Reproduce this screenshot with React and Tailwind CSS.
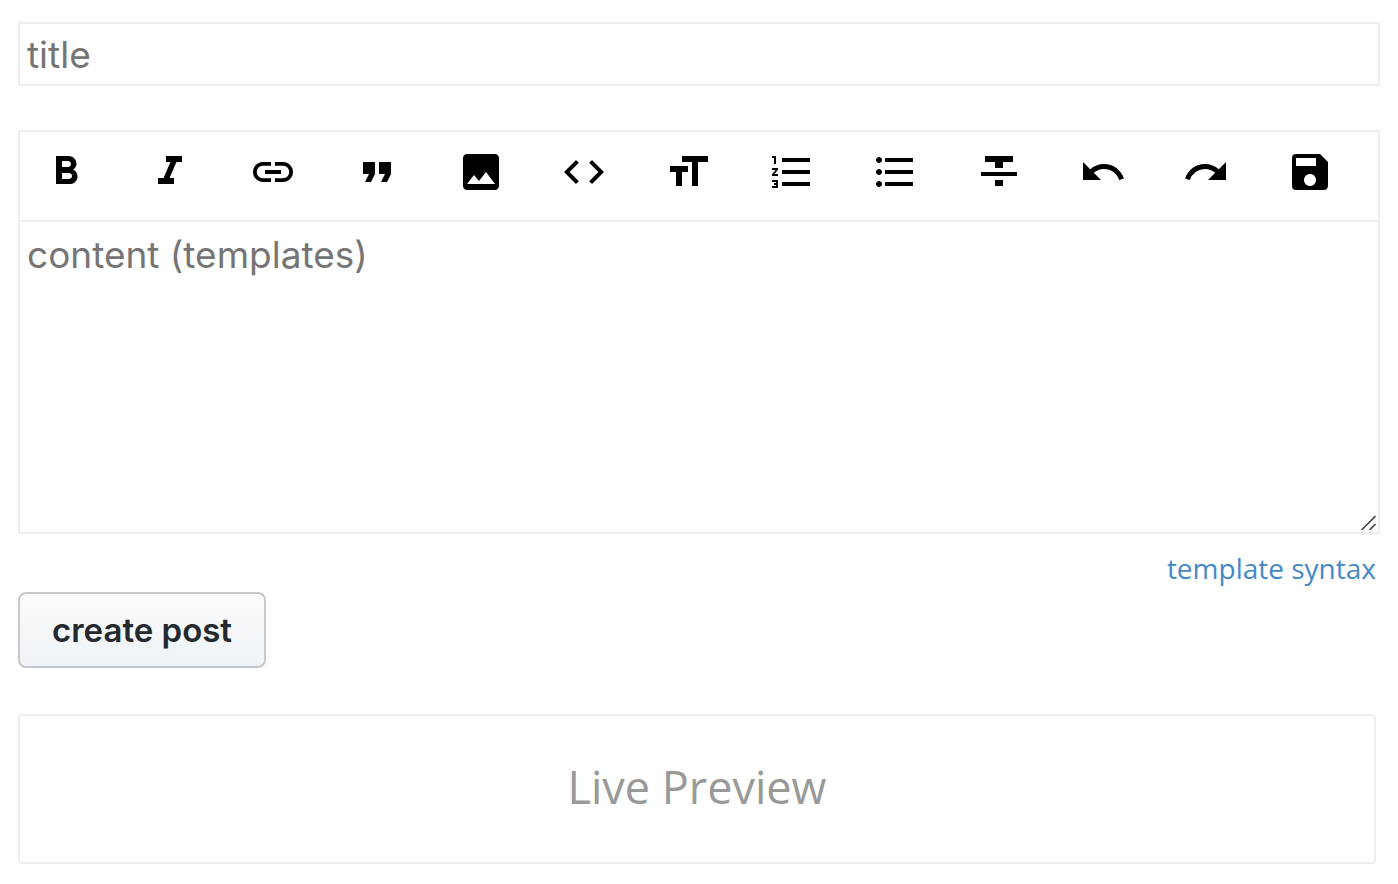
import React from "react";
import {
  MdFormatBold,
  MdFormatItalic,
  MdInsertLink,
  MdFormatQuote,
  MdImage,
  MdCode,
  MdFormatSize,
  MdFormatListNumbered,
  MdFormatListBulleted,
  MdFormatStrikethrough,
  MdUndo,
  MdRedo,
  MdSave,
} from "react-icons/md";

const tools = [
  { label: "Bold", Icon: MdFormatBold },
  { label: "Italic", Icon: MdFormatItalic },
  { label: "Link", Icon: MdInsertLink },
  { label: "Quote", Icon: MdFormatQuote },
  { label: "Image", Icon: MdImage },
  { label: "Code", Icon: MdCode },
  { label: "Text size", Icon: MdFormatSize },
  { label: "Numbered list", Icon: MdFormatListNumbered },
  { label: "Bulleted list", Icon: MdFormatListBulleted },
  { label: "Strikethrough", Icon: MdFormatStrikethrough },
  { label: "Undo", Icon: MdUndo },
  { label: "Redo", Icon: MdRedo },
  { label: "Save", Icon: MdSave },
];

function Toolbar() {
  return (
    <div
      role="toolbar"
      aria-label="Formatting"
      className="flex justify-between border-b-2 border-[#eeeeee] pt-4 pr-11 pb-6 pl-[22px]"
    >
      {tools.map(({ label, Icon }) => (
        <button key={label} type="button" aria-label={label} className="text-black">
          <Icon className="size-12" />
        </button>
      ))}
    </div>
  );
}

function ResizeGrip() {
  return (
    <svg
      aria-hidden="true"
      viewBox="0 0 16 16"
      className="pointer-events-none absolute right-0.5 bottom-0.5 size-4"
      fill="none"
      stroke="#4a4a4a"
      strokeWidth="1.7"
    >
      <path d="M1.5 16 15.5 2M9.5 16l6-6" />
    </svg>
  );
}

export default function App() {
  return (
    <form
      className="bg-white pt-[22px] pr-[18px] pb-5 pl-[18px] font-['Open_Sans',sans-serif]"
      onSubmit={(e) => e.preventDefault()}
    >
      <input
        type="text"
        aria-label="title"
        placeholder="title"
        className="block h-16 w-full border-2 border-[#eeeeee] px-[7px] font-['Inter',sans-serif] text-[37px] text-black outline-none placeholder:text-[#757575]"
      />

      <div className="mt-11 border-2 border-[#eeeeee]">
        <Toolbar />
        <div className="relative">
          <textarea
            aria-label="content"
            placeholder="content (templates)"
            className="block h-[310px] w-full resize-none px-[7px] py-[9px] font-['Inter',sans-serif] text-[37px] leading-[48px] text-black outline-none placeholder:text-[#757575]"
          />
          <ResizeGrip />
        </div>
      </div>

      <div className="mt-3 flex justify-end pr-1">
        <a href="#template-syntax" className="text-[28px] leading-[44px] text-[#4688c7]">
          template syntax
        </a>
      </div>

      <button
        type="submit"
        className="mt-0.5 block rounded-lg border-2 border-[#c5c9cd] bg-linear-to-b from-[#fafbfc] to-[#eff3f6] px-8 py-3 font-['Inter',sans-serif] text-[33px] leading-[48px] font-semibold text-[#24292e]"
      >
        create post
      </button>

      <section className="mt-[46px] mr-1 rounded border-2 border-[#eeeeee] pt-[38px] pb-[42px] text-center text-[45px] leading-[66px] text-[#999999]">
        Live Preview
      </section>
    </form>
  );
}
